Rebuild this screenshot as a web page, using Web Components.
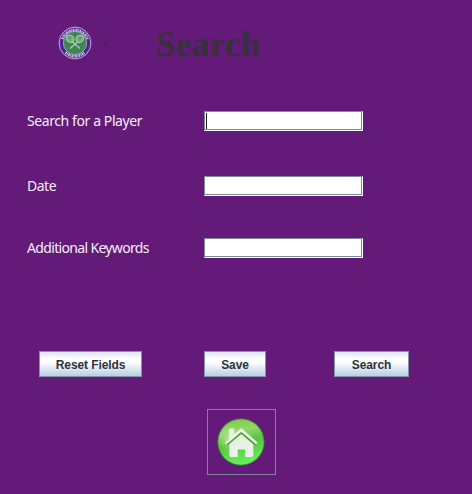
<!DOCTYPE html>
<html lang="en">
<head>
<meta charset="utf-8">
<title>Search</title>
<style>html,body{margin:0;height:100%;background:#631a79;overflow:hidden}</style>
</head>
<body>
<search-page></search-page>
<script>
const define = (name, html) => customElements.define(name, class extends HTMLElement {
  constructor() {
    super();
    const t = document.createElement('template');
    t.innerHTML = html;
    this.attachShadow({ mode: 'open' }).append(t.content.cloneNode(true));
  }
});

define('club-crest', `
<style>:host{display:block;width:52px;height:34px}svg{display:block}</style>
<svg width="52" height="34" viewBox="0 0 52 34">
  <circle cx="17" cy="17" r="15.9" fill="#4b2596" stroke="#d3bddf" stroke-width=".9"/>
  <path d="M4.4 13A13.4 13.4 0 0 1 29.6 13" fill="none" stroke="#d6cbe6" stroke-width="2.7" stroke-dasharray="1.4 .7 .8 .6"/>
  <path d="M7.6 26.4A13.4 13.4 0 0 0 26.4 26.4" fill="none" stroke="#d6cbe6" stroke-width="2.7" stroke-dasharray="1.4 .7 .8 .6"/>
  <circle cx="17" cy="17" r="11.6" fill="#3f8453" stroke="#bfc6cf" stroke-width=".7"/>
  <g stroke="#a9d0ab" fill="#78ae80" stroke-width="1">
    <ellipse cx="12.2" cy="12.8" rx="4" ry="3.4" transform="rotate(35 12.2 12.8)"/>
    <ellipse cx="21.8" cy="12.8" rx="4" ry="3.4" transform="rotate(-35 21.8 12.8)"/>
    <path d="M14.5 16 22 22.5M19.5 16 12 22.5" fill="none" stroke-width="1.3"/>
    <path d="M9.5 12h5M12 10v5M19.5 12h5M22 10v5" stroke="#4d9060" stroke-width=".6"/>
  </g>
  <circle cx="47.5" cy="19" r="1.5" fill="#571469"/>
</svg>`);

define('form-row', `
<style>
:host{display:grid;grid-template-columns:177px 159px;align-items:center;height:20px;
 font:14px/20px "Noto Sans",sans-serif;letter-spacing:var(--track,-.5px);color:#f6eff8}
span{white-space:nowrap}
</style>
<span><slot></slot></span><slot name="field"></slot>`);

define('text-field', `
<style>
:host{display:block;box-sizing:border-box;width:159px;height:20px;background:#fff;
 border:1px solid #7a8a99;border-right-color:#fff;border-bottom-color:#fff}
div{box-sizing:border-box;height:18px;border-right:1px solid #7a8a99;border-bottom:1px solid #7a8a99;padding:1px 0 0 1px}
i{display:none;width:1px;height:16px;background:#222}
:host([focused]) i{display:block}
</style><div><i></i></div>`);

define('push-button', `
<style>
:host{display:flex;box-sizing:border-box;height:26px;align-items:center;justify-content:center;
 border:1px solid #8495aa;background:linear-gradient(#dde8f3 0,#fff 30%,#fff 42%,#b8cfe5 100%);
 font:bold 12px/24px "Liberation Sans",Arial,sans-serif;letter-spacing:-.1px;color:#303236;white-space:nowrap}
span{padding-top:1px}
</style><span><slot></slot></span>`);

define('home-button', `
<style>:host{display:grid;box-sizing:border-box;width:69px;height:66px;border:1px solid #7c8299;place-items:center}svg{display:block;margin:0 1px 1px 0}</style>
<svg width="48" height="48" viewBox="0 0 48 48">
  <defs>
    <linearGradient id="g" x1="0" y1="0" x2=".25" y2="1">
      <stop offset="0" stop-color="#78c743"/><stop offset=".35" stop-color="#91d768"/>
      <stop offset=".6" stop-color="#58c33e"/><stop offset="1" stop-color="#65ed5c"/>
    </linearGradient>
    <radialGradient id="s"><stop offset="0" stop-color="#c8efad" stop-opacity=".85"/><stop offset="1" stop-color="#a4df80" stop-opacity="0"/></radialGradient>
    <linearGradient id="h" x1="0" y1="0" x2="0" y2="1"><stop offset="0" stop-color="#e2f2dc"/><stop offset="1" stop-color="#f1f0ee"/></linearGradient>
  </defs>
  <circle cx="24" cy="24" r="23.2" fill="url(#g)" stroke="#347b32" stroke-width=".8"/>
  <ellipse cx="13" cy="20" rx="12" ry="15" fill="url(#s)"/>
  <path d="M12.2 21V10.5h5.1V16L24.3 10 40.5 24.5 38.7 26.6 24.3 14.3 9.7 26.6 7.8 24.5Z" fill="url(#h)"/>
  <path d="M24.3 16.2 36.3 26.3V37.3Q36.3 39 34.7 39H28.2V31.5H20.7V39H14Q12.4 39 12.4 37.3V26.3Z" fill="url(#h)"/>
  <path d="M10 26.8 24.3 14.8 38.5 26.8" fill="none" stroke="#48963c" stroke-width="1.2"/>
</svg>`);

define('search-page', `
<style>
:host{display:flex;flex-direction:column;box-sizing:border-box;width:472px;height:494px;background:#631a79}
header{display:flex;height:111px;padding:26px 0 0 58px;box-sizing:border-box}
h1{margin:-1px 0 0 46px;font:bold 35px/40px "Liberation Serif","Times New Roman",serif;letter-spacing:.4px;color:#363237}
section{display:grid;grid-template-rows:65px 62px 20px;align-items:start;padding-left:27px;height:240px;box-sizing:border-box}
nav{display:grid;grid-template-columns:103px 62px 75px;column-gap:62px;padding-left:39px;height:58px}
nav push-button:last-child{margin-left:6px;width:75px}
home-button{margin-left:207px}
</style>
<header><club-crest></club-crest><h1>Search</h1></header>
<section>
  <form-row style="--track:-.41px">Search for a Player<text-field slot="field" focused></text-field></form-row>
  <form-row style="--track:-.5px">Date<text-field slot="field"></text-field></form-row>
  <form-row style="--track:-.66px">Additional Keywords<text-field slot="field"></text-field></form-row>
</section>
<nav><push-button>Reset Fields</push-button><push-button>Save</push-button><push-button>Search</push-button></nav>
<home-button></home-button>`);
</script>
</body>
</html>
